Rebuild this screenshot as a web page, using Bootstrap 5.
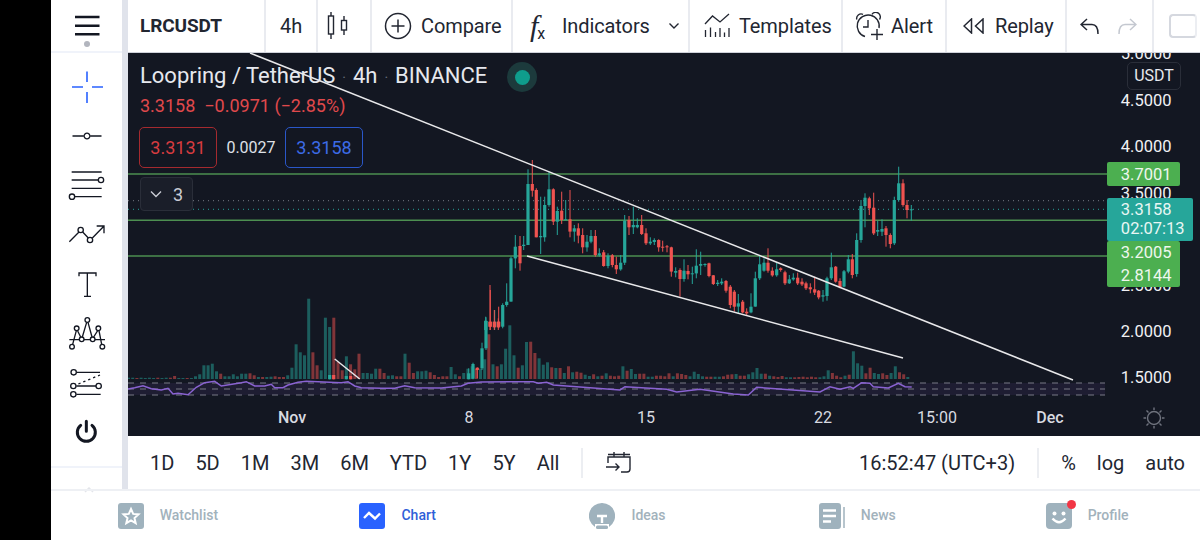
<!DOCTYPE html>
<html lang="en">
<head>
<meta charset="utf-8">
<title>LRCUSDT chart</title>
<link href="https://cdn.jsdelivr.net/npm/bootstrap@5.3.0/dist/css/bootstrap.min.css" rel="stylesheet">
<style>
html,body{margin:0;height:540px;overflow:hidden;background:#000;font-family:Roboto,"Liberation Sans",sans-serif;color:#131722}
.phone{margin-left:51px;height:540px;background:#fff}
.side-rail{width:77px;border-right:6px solid #e0e3eb;flex:none}
.rail-head{height:53px;border-bottom:2px solid #f0f3fa}
.rail-tools{padding-top:9px}
.rail-tool{height:49.3px}
.rail-foot{height:23px;border-top:2px solid #f0f3fa;padding-left:33px;padding-top:9px}
.top-tools{height:53px;border-bottom:1px solid #cfd2da;flex:none}
.tool-cell{height:52px;border-right:2px solid #e9ebf0;font-size:20px;letter-spacing:-.1px;color:#222631;flex:none}
.tool-cell svg{flex:none;display:block}
.w-sym{width:138px;padding-left:12px;font-weight:700;font-size:19px}
.w-int{width:52px;padding-left:14px}
.w-cand{width:54px;padding-left:9px}
.w-comp{width:141px;padding-left:12px;gap:9px}
.w-ind{width:177px;padding-left:17px;gap:12px}
.w-tpl{width:153px;padding-left:14px;gap:9px}
.w-alert{width:104px;padding-left:12px;gap:8px}
.w-replay{width:120px;padding-left:16px;gap:11px}
.w-undo{width:87px;padding-left:13px;gap:19px}
.w-box{padding-left:15px}
.fx-glyph{font-family:"Liberation Serif",serif;font-style:italic;font-size:30px;line-height:1;width:20px;display:flex;align-items:flex-start}
.fx-glyph small{font-size:16px;font-style:normal;font-family:Roboto,sans-serif;margin-top:15px;margin-left:-1px}
.ghost-box{width:28px;height:24px;border:2px solid #d5d8df;border-right-color:#eceef2;border-radius:4px;display:block}
.chart-pane{height:383px;background:#131722;flex:none}
.chart-pane svg{display:block}
.legend-wrap{left:12px;top:12px;color:#e6e8ee}
.legend-title{font-size:22px;line-height:24px;letter-spacing:-.02px}
.legend-sep{color:#6a6f7c;margin:0 7px;font-size:14px}
.live-dot{width:30px;height:30px;border-radius:50%;background:#1c3a3c;margin-left:20px}
.live-dot i{display:block;width:15px;height:15px;border-radius:50%;background:#0f9d8c}
.legend-price{color:#e0494c;font-size:18px;line-height:22px;margin-top:6px}
.legend-price span+span{margin-left:9px}
.quote-row{margin-top:10px;margin-left:-1px}
.quote-box{width:78px;height:41px;border:1px solid #a52a2f;border-radius:5px;color:#d83c40;font-size:18px}
.quote-box.buy{border-color:#2a57c9;color:#3c6be6}
.quote-gap{width:68px;font-size:16px;color:#dfe1e7;text-align:center}
.study-btn{width:53px;height:34px;margin-top:9px;background:#1a1e29;border:1px solid #2a2e39;border-radius:4px;color:#c9ccd4;font-size:18px;gap:11px}
.unit-btn{right:19px;top:9px;width:54px;height:28px;border:1px solid #2a2e39;border-radius:5px;background:#131722;color:#e6e8ee;font-size:16px}
.range-bar{height:53px;flex:none;font-size:20px;color:#222631}
.range-opts{padding-left:22px;gap:21px}
.range-div{width:2px;height:30px;background:#eceef2;margin:0 23px 0 22px}
.range-right{margin-left:auto;padding-right:15px;gap:21px}
.tab-strip{height:51px;border-top:2px solid #eef0f4;flex:none}
.tab-item{gap:16px;font-size:14px;font-weight:500;color:#a2b2bc;padding-left:4px}
.tab-item.on{color:#2f5fd8}
.tab-item svg{display:block}
.tab-ico{width:26px;height:26px;flex:none}
.ping{right:-4px;top:-3px;width:9px;height:9px;border-radius:50%;background:#f23645;border:0}
</style>
</head>
<body>
<div class="phone d-flex flex-column">
  <div class="d-flex flex-grow-1">
    <aside class="side-rail d-flex flex-column">
      <div class="rail-head d-flex justify-content-center">
        <svg width="40" height="53" viewBox="67 0 40 53"><path d="M75 17H99.500M75 25.700H99.500M75 34.300H99.500" stroke="#131722" stroke-width="2.600" fill="none"/><circle cx="87" cy="44" r="3" fill="#b2b5be"/></svg>
      </div>
      <div class="rail-tools">
        <div class="rail-tool d-flex justify-content-center align-items-center"><svg width="40" height="40" viewBox="67 67 40 40"><path d="M87 71.500V82M87 92V103M72 87H83M92 87H103" stroke="#2962ff" stroke-width="1.600" fill="none"/></svg></div>
        <div class="rail-tool d-flex justify-content-center align-items-center"><svg width="40" height="40" viewBox="-20 -20 40 40"><path d="M-14.500 0H-3.200M3.200 0H14.500" stroke="#131722" stroke-width="1.500"/><circle r="2.900" fill="#fff" stroke="#131722" stroke-width="1.300"/></svg></div>
        <div class="rail-tool d-flex justify-content-center align-items-center"><svg width="40" height="40" viewBox="51 17 120 120" fill="none" stroke="#131722" stroke-width="4"><path d="M65 38H155M65 62H145M65 87H155M75 112H155"/><circle cx="153" cy="62" r="8"/><circle cx="66" cy="112" r="8"/></svg></div>
        <div class="rail-tool d-flex justify-content-center align-items-center"><svg width="40" height="40" viewBox="51 165 120 120" fill="none" stroke="#131722" stroke-width="4"><path d="M58 245L87 216M98 216L115 234M127 234L160 200M140 198H162V220"/><circle cx="92" cy="210" r="8"/><circle cx="120" cy="240" r="8"/></svg></div>
        <div class="rail-tool d-flex justify-content-center align-items-center"><svg width="40" height="40" viewBox="51 313 120 120" fill="none" stroke="#131722" stroke-width="4"><path d="M87 350V340H138V350M112 340V410M102 410H123"/></svg></div>
        <div class="rail-tool d-flex justify-content-center align-items-center"><svg width="40" height="40" viewBox="51 461 120 120" fill="none" stroke="#131722" stroke-width="4"><path d="M58 541H165M68 555L79 514M83 515L92 533M97 533L110 489M114 489L126 533M131 533L143 514M147 514L155 555"/><g fill="#fff"><circle cx="112" cy="482" r="7"/><circle cx="80" cy="507" r="7"/><circle cx="145" cy="507" r="7"/><circle cx="95" cy="540" r="7"/><circle cx="128" cy="540" r="7"/><circle cx="66" cy="562" r="7"/><circle cx="157" cy="562" r="7"/></g></svg></div>
        <div class="rail-tool d-flex justify-content-center align-items-center"><svg width="40" height="40" viewBox="51 609 120 120" fill="none" stroke="#131722" stroke-width="4"><path d="M80 640H150M79 681H138M79 706H152"/><path d="M85 675L150 648" stroke-dasharray="7 9"/><circle cx="71" cy="640" r="8"/><circle cx="70" cy="681" r="8"/><circle cx="146" cy="681" r="8"/><circle cx="70" cy="706" r="8"/></svg></div>
        <div class="rail-tool d-flex justify-content-center align-items-center"><svg width="40" height="40" viewBox="51 757 120 120" fill="none" stroke="#131722" stroke-width="9" stroke-linecap="round"><path d="M109 785V815M92 797A27 27 0 1 0 126 797"/></svg></div>
      </div>
      <div class="rail-foot mt-auto"><svg width="10" height="6" viewBox="0 0 10 6"><path d="M1 5L5 1L9 5" fill="none" stroke="#e3e5ea" stroke-width="1.500"/></svg></div>
    </aside>
    <main class="d-flex flex-column flex-grow-1" style="min-width:0">
      <div class="top-tools d-flex">
        <div class="tool-cell w-sym d-flex align-items-center">LRCUSDT</div>
        <div class="tool-cell w-int d-flex align-items-center">4h</div>
        <div class="tool-cell w-cand d-flex align-items-center"><svg width="26" height="28" viewBox="0 0 26 28" fill="none" stroke="#222631" stroke-width="1.400"><path d="M4 0V4M4 22V27M17 4V8.500M17 18V23"/><rect x="1.500" y="4" width="5" height="18"/><rect x="14.500" y="8.500" width="5" height="9.500"/></svg></div>
        <div class="tool-cell w-comp d-flex align-items-center"><svg width="28" height="28" viewBox="0 0 28 28" fill="none" stroke="#222631" stroke-width="1.500"><circle cx="14" cy="14" r="12.500"/><path d="M14 7.500V20.500M7.500 14H20.500"/></svg><span>Compare</span></div>
        <div class="tool-cell w-ind d-flex align-items-center"><span class="fx-glyph">f<small>x</small></span><span>Indicators</span><svg class="ms-auto me-2" width="12" height="8" viewBox="0 0 12 8"><path d="M1.500 1.500L6 6L10.500 1.500" fill="none" stroke="#222631" stroke-width="1.400"/></svg></div>
        <div class="tool-cell w-tpl d-flex align-items-center"><svg width="26" height="26" viewBox="0 0 26 26" fill="none" stroke="#222631" stroke-width="1.300"><path d="M1 11L8.500 3L16 9L25 1"/><path d="M1.500 24V17M6.500 24V14.500M11.500 24V19M16 24V15M20.500 24V19.500M25 24V15"/></svg><span>Templates</span></div>
        <div class="tool-cell w-alert d-flex align-items-center"><svg width="28" height="28" viewBox="0 0 28 28" fill="none" stroke="#222631" stroke-width="1.400"><path d="M10 24.500A11 11 0 1 1 24 16"/><path d="M1.800 7.500A4.500 4.500 0 0 1 8 2.300M17 2.300A4.500 4.500 0 0 1 24.500 7.500M13 8V15H8M22 17V28M16 22.500H28"/></svg><span>Alert</span></div>
        <div class="tool-cell w-replay d-flex align-items-center"><svg width="21" height="16" viewBox="0 0 21 16" fill="none" stroke="#222631" stroke-width="1.500"><path d="M8.500 1L1 8L8.500 15ZM20 1L12.500 8L20 15Z"/></svg><span>Replay</span></div>
        <div class="tool-cell w-undo d-flex align-items-center"><svg width="19" height="16" viewBox="0 0 19 16" fill="none" stroke="#222631" stroke-width="1.500"><path d="M7 1L1 6.500L7 12M1 6.500H12Q18 6.500 18 16"/></svg><svg width="19" height="16" viewBox="0 0 19 16" fill="none" stroke="#c4c8d0" stroke-width="1.500"><path d="M12 1L18 6.500L12 12M18 6.500H7Q1 6.500 1 16"/></svg></div>
        <div class="tool-cell w-box d-flex align-items-center border-0"><span class="ghost-box"></span></div>
      </div>
      <div class="chart-pane position-relative">
        <svg id="plot" width="1072" height="383" viewBox="128 53 1072 383" role="img" aria-label="LRCUSDT candlestick chart"></svg>
        <div class="legend-wrap position-absolute">
          <div class="d-flex align-items-center" style="height:24px">
            <span class="legend-title">Loopring / TetherUS<span class="legend-sep">·</span>4h<span class="legend-sep">·</span>BINANCE</span>
            <span class="live-dot d-flex align-items-center justify-content-center"><i></i></span>
          </div>
          <div class="legend-price"><span>3.3158</span><span>−0.0971 (−2.85%)</span></div>
          <div class="quote-row d-flex align-items-center">
            <div class="quote-box d-flex align-items-center justify-content-center">3.3131</div>
            <div class="quote-gap">0.0027</div>
            <div class="quote-box buy d-flex align-items-center justify-content-center">3.3158</div>
          </div>
          <div class="study-btn d-flex align-items-center justify-content-center"><svg width="12" height="8" viewBox="0 0 12 8"><path d="M1 1.500L6 6.500L11 1.500" fill="none" stroke="#c9ccd4" stroke-width="1.400"/></svg><span>3</span></div>
        </div>
        <div class="unit-btn position-absolute d-flex align-items-center justify-content-center">USDT</div>
      </div>
      <div class="range-bar d-flex align-items-center">
        <div class="range-opts d-flex"><span>1D</span><span>5D</span><span>1M</span><span>3M</span><span>6M</span><span>YTD</span><span>1Y</span><span>5Y</span><span>All</span></div>
        <div class="range-div"></div>
        <svg width="26" height="23" viewBox="0 0 26 23" fill="none" stroke="#222631" stroke-width="1.400"><path d="M2 12V6H24V18Q24 21 21 21H15M8 1V6M18 1V6M2 3.500H24M0 16H13M9.500 12.500L13 16L9.500 19.500"/></svg>
        <div class="range-right d-flex align-items-center"><span>16:52:47 (UTC+3)</span><span class="range-div" style="margin:0 1px"></span><span>%</span><span>log</span><span>auto</span></div>
      </div>
    </main>
  </div>
  <nav class="tab-strip row g-0 align-items-center">
    <div class="col d-flex justify-content-center"><div class="tab-item d-flex align-items-center"><svg class="tab-ico" viewBox="0 0 26 26"><rect width="26" height="26" rx="3" fill="#9fb2bd"/><path d="M13 6L15.200 10.900L20.500 11.400L16.500 15L17.700 20.200L13 17.500L8.300 20.200L9.500 15L5.500 11.400L10.800 10.900Z" fill="none" stroke="#fff" stroke-width="2"/></svg><span>Watchlist</span></div></div>
    <div class="col d-flex justify-content-center"><div class="tab-item on d-flex align-items-center"><svg class="tab-ico" viewBox="0 0 26 26"><rect width="26" height="26" rx="3" fill="#2962ff"/><path d="M5 15L10 10L16 15.500L21 10.500" fill="none" stroke="#fff" stroke-width="2.400"/></svg><span>Chart</span></div></div>
    <div class="col d-flex justify-content-center"><div class="tab-item d-flex align-items-center"><svg class="tab-ico" viewBox="0 0 26 26"><path d="M13 0A13 13 0 0 1 20 24V21H6V24A13 13 0 0 1 13 0Z" fill="#9fb2bd"/><path d="M8 13H18M13 13V20" stroke="#fff" stroke-width="2.400"/><rect x="7" y="22.500" width="12" height="3.500" rx="1.500" fill="#9fb2bd"/></svg><span>Ideas</span></div></div>
    <div class="col d-flex justify-content-center"><div class="tab-item d-flex align-items-center"><svg class="tab-ico" viewBox="0 0 26 26"><rect width="22" height="26" rx="3" fill="#9fb2bd"/><path d="M4 7.500H17M4 13H17M4 18.500H12" stroke="#fff" stroke-width="2.400"/><path d="M25 4V25" stroke="#9fb2bd" stroke-width="1.500"/></svg><span>News</span></div></div>
    <div class="col d-flex justify-content-center"><div class="tab-item d-flex align-items-center"><span class="position-relative tab-ico"><svg width="26" height="26" viewBox="0 0 26 26"><rect width="26" height="26" rx="4" fill="#9fb2bd"/><circle cx="8.500" cy="10.500" r="2" fill="#fff"/><circle cx="17.500" cy="10.500" r="2" fill="#fff"/><path d="M6.500 15.500Q13 23 19.500 15.500" fill="none" stroke="#fff" stroke-width="2.400"/></svg><span class="ping position-absolute"></span></span><span>Profile</span></div></div>
  </nav>
</div>
<script>
(function(){
var G='#26a69a',R='#ef5350',out=[];
function line(x1,y1,x2,y2,c,w,extra){out.push('<line x1="'+x1+'" y1="'+y1+'" x2="'+x2+'" y2="'+y2+'" stroke="'+c+'" stroke-width="'+w+'"'+(extra||'')+'/>');}
function rect(x,y,w,h,c,extra){out.push('<rect x="'+x+'" y="'+y+'" width="'+w+'" height="'+h+'" fill="'+c+'"'+(extra||'')+'/>');}
function text(x,y,s,c,size,extra){out.push('<text x="'+x+'" y="'+y+'" fill="'+c+'" font-size="'+size+'" font-family="Roboto,sans-serif" '+(extra||'')+'>'+s+'</text>');}
/* volume */
var vol=[4,4,-3,4,3,4,3,-4,3,4,-4,-9,3,3,-3,3,8,14,41,41,46,23,-16,8,8,14,8,16,16,-17,-11,6,-6,6,7,-8,-6,-6,11,34,104,80,71,241,-80,-41,26,184,156,-184,-51,-26,68,-44,-29,-76,18,18,16,31,-31,-18,10,11,-8,-8,76,-49,-18,23,23,25,-20,-12,-6,-8,-8,36,14,-8,18,31,38,-31,31,59,-134,44,-38,44,91,161,71,-34,41,111,
-112,-78,62,43,50,-35,33,-33,18,-38,20,-22,-19,13,9,-14,8,-10,17,-10,-8,-10,38,-25,30,15,-16,-16,7,7,-10,-10,-8,-17,8,-17,-15,-12,8,22,15,8,-7,-7,7,7,-8,-13,-14,15,-10,-10,14,20,33,16,-16,10,-8,-6,-9,5,5,-5,-6,-7,-5,-7,-5,5,8,26,-18,-10,-5,10,-13,83,47,40,-17,-34,18,15,-17,-12,18,38,-20,-14,6];
vol.forEach(function(h,i){var a=Math.abs(h)/3,x=128.5+4.19*i;rect((x-1.500).toFixed(1),(379-a).toFixed(1),3,a.toFixed(1),h>0?G:R,' fill-opacity=".5"');});
/* rsi band */
rect(128,383,977,12,'#7e57c2',' fill-opacity=".1"');
[383,389,395].forEach(function(y,k){line(128,y,1105,y,'#787b86',k==1?1:1.2,' stroke-dasharray="6 6"');});
var r1=[[0,297],[20,293],[45,287],[70,296],[100,300],[120,295],[135,312],[150,310],[180,314],[205,292],[230,278],[260,274],[280,288],[340,278],[355,275],[380,288],[410,288],[430,283],[440,293],[465,293],[480,285],[510,277],[535,274],[640,278],[660,275],[680,288],[700,293],[760,295],[800,295],[830,287],[860,293],[940,294],[1000,288],[1020,280],[1060,276]].map(function(p){return (128+p[0]/3).toFixed(1)+','+(290+p[1]/3).toFixed(1);});
var r2=[[100,155],[115,160],[140,157],[160,165],[250,172],[360,180],[375,170],[500,178],[530,186],[600,178],[700,192],[745,195],[770,172],[960,186],[990,170],[1020,178],[1050,170],[1060,175],[1085,158],[1110,160],[1120,170],[1165,174],[1195,160],[1215,170],[1235,171]].map(function(p){return (500+p[0]/3).toFixed(1)+','+(330+p[1]/3).toFixed(1);});
out.push('<polyline points="'+r1.concat(r2).join(' ')+'" fill="none" stroke="#8a63d2" stroke-width="1.500"/>');
/* levels */
line(128,200.7,1107,200.7,'#787b86',1,' stroke-dasharray="1 4"');
line(128,209.3,1107,209.3,'#26a69a',1,' stroke-dasharray="1 4"');
[174,220.3,256].forEach(function(y){line(128,y,1107,y,'#4d8f51',1.5);});
/* candles */
function drawCandles(list,ox,oy){list.forEach(function(c){var col=c[0]>0?G:R,x=ox+Math.abs(c[0])/3,bt=oy+c[1]/3,bb=oy+c[2]/3,wt=oy+c[3]/3,wb=Math.min(oy+c[4]/3,380);
 line(x.toFixed(1),wt.toFixed(1),x.toFixed(1),wb.toFixed(1),col,1);
 rect((x-1.600).toFixed(1),bt.toFixed(1),3.2,Math.max(bb-bt,1).toFixed(1),col);});}
drawCandles([[605,255,268,255,268],[-617,255,268,255,268],[655,258,268,258,268],[-668,258,268,258,268],[1022,250,268,235,268],[1035,222,266,218,268],[-1048,233,240,232,265],[1062,175,235,158,240],[1074,93,175,82,180],[-1087,95,110,0,120],[1100,95,110,60,120],[-1112,95,110,50,115]],128,290);
drawCandles([[17,512,540,500,540],[-30,515,530,405,540],[-43,515,532,480,540],[-55,515,532,505,540],[68,465,530,460,535],[80,455,465,400,470],[93,325,455,320,455],[106,290,325,255,355],[-120,288,340,258,362],[131,284,288,258,300],[144,102,285,58,285],[-157,102,122,30,140],[-169,120,262,115,262],[182,258,262,140,312],[194,165,262,140,275],[207,118,165,65,170],[-220,118,215,115,225],[232,183,215,170,255],[-245,182,210,125,222],[257,208,210,150,210],[-270,208,245,120,262],[283,235,245,225,275],[-295,235,257,220,280],[-308,255,292,235,310],[321,275,292,255,305],[333,258,275,240,280],[-346,258,315,240,320],[358,310,316,295,320],[-371,307,348,300,350],[384,317,348,310,355],[-397,316,345,312,352],[-409,345,358,320,372],[422,338,358,315,362],[434,212,338,195,345],[-447,210,232,198,255],[460,225,232,170,252],[472,225,232,205,235],[-485,225,252,195,255],[-498,250,280,235,285],[511,275,280,262,285],[523,270,276,265,285],[-536,270,292,268,305],[-548,290,292,272,305],[-561,289,292,285,307],[-574,292,365,290,380],[587,363,368,352,382],[-600,360,387,355,440],[612,362,387,328,395],[-624,363,373,345,388],[637,370,373,350,402],[649,347,370,298,385],[662,342,347,305,375],[675,342,345,340,350],[-687,340,378,338,382],[-700,376,402,375,405],[713,398,402,390,408],[725,395,400,385,405],[-738,393,422,390,428]],480,150);
drawCandles([[-1,410,465,405,475],[-13,425,470,420,485],[25,460,470,432,490],[-38,455,487,450,490],[-50,485,490,475,495],[63,470,487,430,490],[76,385,470,365,470],[89,343,385,315,390],[102,338,362,325,365],[-114,338,362,295,368],[-127,362,376,352,380],[140,358,376,337,380],[-152,355,360,352,365],[-165,367,400,362,405],[178,388,400,375,402],[190,383,388,370,392],[-203,383,400,368,405],[-216,395,403,385,408],[-228,400,415,395,420],[-241,412,418,400,430],[-254,418,428,380,435],[-266,422,442,420,448],[279,436,440,420,455],[291,385,438,380,452],[304,352,385,308,390],[-317,350,395,348,398],[-330,393,412,385,415],[342,364,410,360,412],[355,328,365,315,370],[-367,328,375,312,385],[380,270,372,250,380],[393,168,270,150,278],[405,143,168,130,232],[-418,145,175,140,195],[-431,173,250,128,255],[443,240,245,212,258],[456,237,245,208,258],[-468,235,255,228,290],[-481,255,282,250,295],[493,150,280,140,285],[506,100,150,50,155],[-519,100,165,88,170],[-531,165,180,150,205],[544,178,180,165,212]],730,150);
/* trend lines */
line(250,53,1073,380,'#e8e8ea',1.5);
line(527,256,903,358,'#e8e8ea',1.5);
line(334.7,359,359.7,379,'#e8e8ea',1.5);
/* price axis */
var ax='text-anchor="end"';
[['5.0000',59],['4.5000',106],['4.0000',152],['3.5000',199],['2.5000',291],['2.0000',337],['1.5000',383]].forEach(function(p){text(1171.500,p[1],p[0],'#f0f1f4',16.500,ax);});
function tag(x,y,w,h,c,r){out.push('<rect x="'+x+'" y="'+y+'" width="'+w+'" height="'+h+'" rx="'+r+'" fill="'+c+'"/>');}
tag(1107,241,73,46,'#4caf50',2);
tag(1107,162,73,24,'#4caf50',2);
text(1171.500,180,'3.7001','#eef7ee',16.500,ax);
text(1171.500,258,'3.2005','#eef7ee',16.500,ax);
text(1171.500,281,'2.8144','#eef7ee',16.500,ax);
tag(1107,198,86,43,'#26a69a',2);
text(1171.500,215,'3.3158','#e8f6f4',16.500,ax);
text(1184.500,234,'02:07:13','#e8f6f4',16.500,ax);
/* time axis */
[['Nov',292,700],['8',469,400],['15',646,400],['22',823,400],['15:00',937,500],['Dec',1050,700]].forEach(function(t){text(t[0]=='15:00'?937:t[1],423,t[0],'#d8dae0',16,'text-anchor="middle" font-weight="'+(t[2]==700?500:400)+'"');});
/* sun */
out.push('<g stroke="#6f737e" fill="none" stroke-width="1.400"><circle cx="1154" cy="418" r="6.500"/><path d="M1154 407.500V410M1154 426V428.500M1143.500 418H1146M1162 418H1164.500M1146.500 410.500L1148.500 412.500M1159.500 423.500L1161.500 425.500M1161.500 410.500L1159.500 412.500M1148.500 423.500L1146.500 425.500"/></g>');
document.getElementById('plot').innerHTML=out.join('');
})();
</script>
<script src="https://cdn.jsdelivr.net/npm/bootstrap@5.3.0/dist/js/bootstrap.bundle.min.js"></script>
</body>
</html>
